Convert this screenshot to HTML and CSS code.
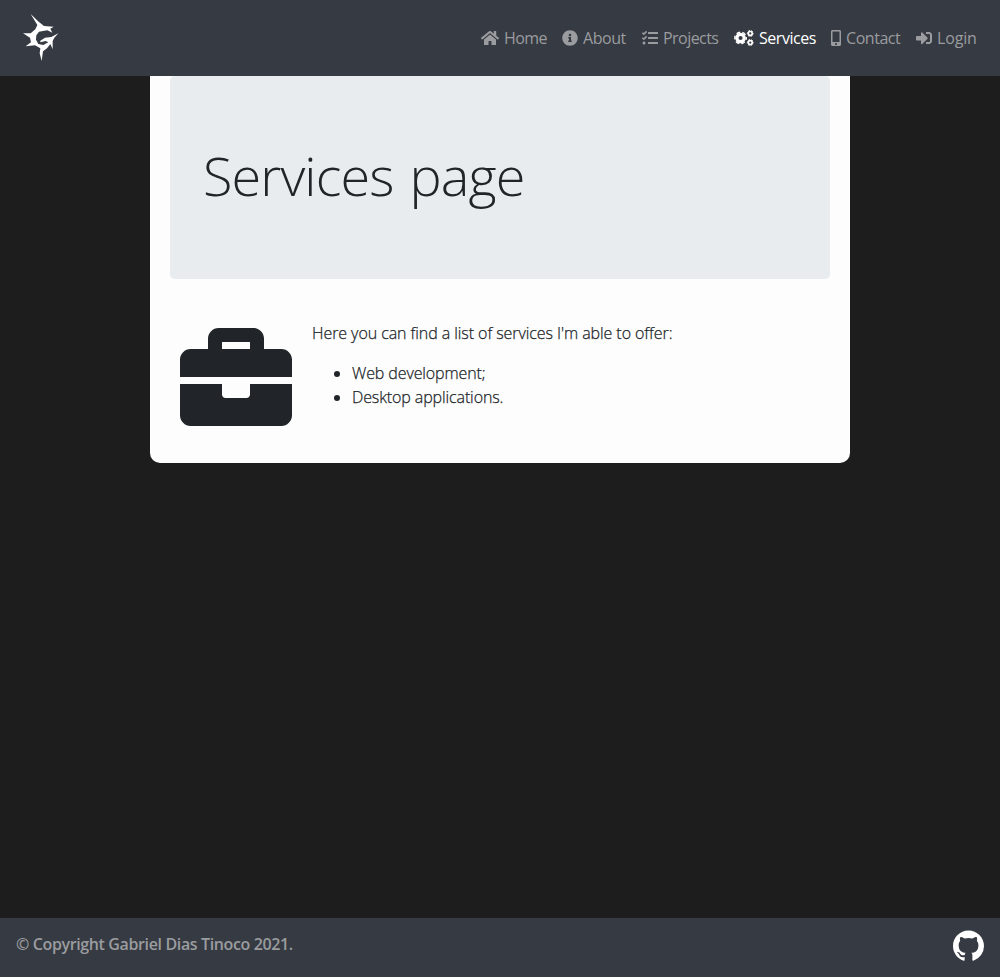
FILE: index.html
```html
<!DOCTYPE html>
<html lang="en">
<head>
<meta charset="utf-8">
<title>Services</title>
<link rel="stylesheet" href="styles.css">
</head>
<body>
<header class="navbar">
  <a class="brand"><svg class="logo" viewBox="0 0 180 225"><path fill-rule="evenodd" d="M62 27 86 50 102 63 131 65 121 71 127 83 112 76 99 78 87 80 79 91 78 104 85 117 100 120 115 112 107 108 91 112 91 107 105 98 124 96 145 85 133 98 128 108 128 133 121 117 111 130 99 139 95 168 89 145 91 130 75 121 47 124 63 112 60 98 39 85 62 85 76 73 82 60Z"/></svg></a>
  <nav class="links">
    <a class="link home"><svg viewBox="0 0 576 512"><path d="M280.37 148.26L96 300.11V464a16 16 0 0 0 16 16l112.06-.29a16 16 0 0 0 15.92-16V368a16 16 0 0 1 16-16h64a16 16 0 0 1 16 16v95.64a16 16 0 0 0 16 16.05L464 480a16 16 0 0 0 16-16V300L295.67 148.26a12.19 12.19 0 0 0-15.3 0zM571.6 251.47L488 182.56V44.05a12 12 0 0 0-12-12h-56a12 12 0 0 0-12 12v72.61L318.47 43a48 48 0 0 0-61 0L4.34 251.47a12 12 0 0 0-1.6 16.9l25.5 31A12 12 0 0 0 45.15 301l235.22-193.74a12.19 12.19 0 0 1 15.3 0L530.9 301a12 12 0 0 0 16.9-1.6l25.5-31a12 12 0 0 0-1.7-16.93z"/></svg><span>Home</span></a>
    <a class="link about"><svg viewBox="0 0 512 512"><path d="M256 8C119.043 8 8 119.083 8 256c0 136.997 111.043 248 248 248s248-111.003 248-248C504 119.083 392.957 8 256 8zm0 110c23.196 0 42 18.804 42 42s-18.804 42-42 42-42-18.804-42-42 18.804-42 42-42zm56 254c0 6.627-5.373 12-12 12h-88c-6.627 0-12-5.373-12-12v-24c0-6.627 5.373-12 12-12h12v-64h-12c-6.627 0-12-5.373-12-12v-24c0-6.627 5.373-12 12-12h64c6.627 0 12 5.373 12 12v100h12c6.627 0 12 5.373 12 12v24z"/></svg><span>About</span></a>
    <a class="link projects"><svg viewBox="0 0 512 512"><path d="M139.61 35.5a12 12 0 0 0-17 0L58.93 98.81l-22.7-22.12a12 12 0 0 0-17 0L3.53 92.41a12 12 0 0 0 0 17l47.59 47.4a12.78 12.78 0 0 0 17.61 0l15.59-15.62L156.52 69a12.09 12.09 0 0 0 .09-17zm0 159.19a12 12 0 0 0-17 0l-63.68 63.72-22.7-22.1a12 12 0 0 0-17 0L3.53 252a12 12 0 0 0 0 17L51 316.5a12.77 12.77 0 0 0 17.6 0l15.7-15.69 72.2-72.22a12 12 0 0 0 .09-16.9zM64 368c-26.49 0-48.59 21.5-48.59 48S37.53 464 64 464a48 48 0 0 0 0-96zm432 16H208a16 16 0 0 0-16 16v32a16 16 0 0 0 16 16h288a16 16 0 0 0 16-16v-32a16 16 0 0 0-16-16zm0-320H208a16 16 0 0 0-16 16v32a16 16 0 0 0 16 16h288a16 16 0 0 0 16-16V80a16 16 0 0 0-16-16zm0 160H208a16 16 0 0 0-16 16v32a16 16 0 0 0 16 16h288a16 16 0 0 0 16-16v-32a16 16 0 0 0-16-16z"/></svg><span>Projects</span></a>
    <a class="link services active"><svg viewBox="0 0 640 512"><g fill="none" stroke="currentColor"><circle cx="210" cy="256" r="118" stroke-width="104"/><circle cx="210" cy="256" r="184" stroke-width="46" stroke-dasharray="120 72.68" stroke-dashoffset="60"/><circle cx="520" cy="110" r="62" stroke-width="52"/><circle cx="520" cy="110" r="94" stroke-width="32" stroke-dasharray="60 38.44" stroke-dashoffset="30"/><circle cx="520" cy="402" r="62" stroke-width="52"/><circle cx="520" cy="402" r="94" stroke-width="32" stroke-dasharray="60 38.44" stroke-dashoffset="30"/></g></svg><span>Services</span></a>
    <a class="link contact"><svg viewBox="0 0 320 512"><path d="M272 0H48C21.5 0 0 21.5 0 48v416c0 26.5 21.5 48 48 48h224c26.5 0 48-21.5 48-48V48c0-26.5-21.5-48-48-48zM160 480c-17.7 0-32-14.3-32-32s14.3-32 32-32 32 14.3 32 32-14.3 32-32 32zm112-108c0 6.6-5.4 12-12 12H60c-6.6 0-12-5.4-12-12V60c0-6.6 5.4-12 12-12h200c6.6 0 12 5.4 12 12v312z"/></svg><span>Contact</span></a>
    <a class="link login"><svg viewBox="0 0 512 512"><path d="M416 448h-84c-6.6 0-12-5.4-12-12v-40c0-6.6 5.4-12 12-12h84c17.7 0 32-14.3 32-32V160c0-17.7-14.3-32-32-32h-84c-6.6 0-12-5.4-12-12V76c0-6.6 5.4-12 12-12h84c53 0 96 43 96 96v192c0 53-43 96-96 96zm-47-201L201 79c-15-15-41-4.5-41 17v96H24c-13.3 0-24 10.7-24 24v96c0 13.3 10.7 24 24 24h136v96c0 21.5 26 32 41 17l168-168c9.3-9.4 9.3-24.6 0-34z"/></svg><span>Login</span></a>
  </nav>
</header>
<main class="card">
  <section class="jumbotron"><h1 class="title">Services page</h1></section>
  <section class="offer">
    <svg class="briefcase" viewBox="0 0 512 512"><path d="M320 336c0 8.84-7.16 16-16 16h-96c-8.84 0-16-7.16-16-16v-48H0v144c0 25.6 22.4 48 48 48h416c25.6 0 48-22.4 48-48V288H320v48zm144-208h-80V80c0-25.6-22.4-48-48-48H176c-25.6 0-48 22.4-48 48v48H48c-25.6 0-48 22.4-48 48v80h512v-80c0-25.6-22.4-48-48-48zm-144 0H192V96h128v32z"/></svg>
    <div class="copy">
      <p class="intro">Here you can find a list of services I'm able to offer:</p>
      <ul class="list"><li>Web development;</li><li>Desktop applications.</li></ul>
    </div>
  </section>
</main>
<footer class="footer">
  <span class="copyright">© Copyright Gabriel Dias Tinoco 2021.</span>
  <a class="github"><svg viewBox="0 0 16 16"><path d="M8 0C3.58 0 0 3.58 0 8c0 3.54 2.29 6.53 5.47 7.59.4.07.55-.17.55-.38 0-.19-.01-.82-.01-1.49-2.01.37-2.53-.49-2.69-.94-.09-.23-.48-.94-.82-1.13-.28-.15-.68-.52-.01-.53.63-.01 1.08.58 1.23.82.72 1.21 1.87.87 2.33.66.07-.52.28-.87.51-1.07-1.78-.2-3.64-.89-3.64-3.95 0-.87.31-1.59.82-2.15-.08-.2-.36-1.02.08-2.12 0 0 .67-.21 2.2.82.64-.18 1.32-.27 2-.27s1.36.09 2 .27c1.53-1.04 2.2-.82 2.2-.82.44 1.1.16 1.92.08 2.12.51.56.82 1.27.82 2.15 0 3.07-1.87 3.75-3.65 3.95.29.25.54.73.54 1.48 0 1.07-.01 1.93-.01 2.2 0 .21.15.46.55.38A8.01 8.01 0 0 0 16 8c0-4.42-3.58-8-8-8z"/></svg></a>
</footer>
</body>
</html>
```
FILE: styles.css
```css
* { box-sizing: border-box; }
body {
  margin: 0;
  min-height: 100vh;
  display: flex;
  flex-direction: column;
  background: #1d1d1d;
  color: #212529;
  font: 400 16px/24px "Open Sans", "Noto Sans", sans-serif;
}
svg { display: block; fill: currentColor; flex: none; }
.navbar {
  height: 76px;
  padding: 0 24px 0 10px;
  display: flex;
  justify-content: space-between;
  align-items: center;
  background: #363a42;
}
.brand { color: #fff; }
.logo { width: 60px; height: 75px; margin-top: 9px; filter: blur(0.4px); }
.links {
  display: grid;
  grid-template-columns: 65px 64px 76px 81px 69px 60px;
  column-gap: 16px;
}
.link {
  display: flex;
  align-items: center;
  gap: 5px;
  color: #9a9c9f;
  white-space: nowrap;
  letter-spacing: -0.45px;
}
.link svg { height: 16px; }
.home, .projects { letter-spacing: -0.55px; }
.login { letter-spacing: -0.15px; }
.link.active { color: #fff; }
.card {
  width: 700px;
  height: 387px;
  margin: 0 auto;
  padding: 0 20px;
  background: #fdfdfd;
  border-radius: 0 0 10px 10px;
}
.jumbotron {
  height: 203px;
  padding: 62px 33px;
  background: #e8ecef;
  border-radius: 5px;
}
.title {
  margin: 0;
  font-size: 54px;
  line-height: 75px;
  font-weight: 300;
  letter-spacing: -0.9px;
  word-spacing: 3px;
  white-space: nowrap;
}
.offer {
  display: flex;
  gap: 20px;
  padding: 42px 10px 0;
}
.briefcase { width: 112px; height: 112px; }
.copy {
  white-space: nowrap;
  font-weight: 300;
  -webkit-text-stroke: 0.25px currentColor;
}
.intro { margin: 0 0 16px; letter-spacing: -0.07px; }
.list { margin: 0; padding-left: 40px; letter-spacing: -0.11px; }
.footer {
  height: 59px;
  margin-top: auto;
  padding: 0 16px;
  display: flex;
  justify-content: space-between;
  background: #363a42;
  color: #9a9c9f;
}
.copyright { margin-top: 14px; font-weight: 600; letter-spacing: -0.37px; }
.github { margin-top: 12px; color: #fff; }
.github svg { width: 31px; height: 32px; }
```
